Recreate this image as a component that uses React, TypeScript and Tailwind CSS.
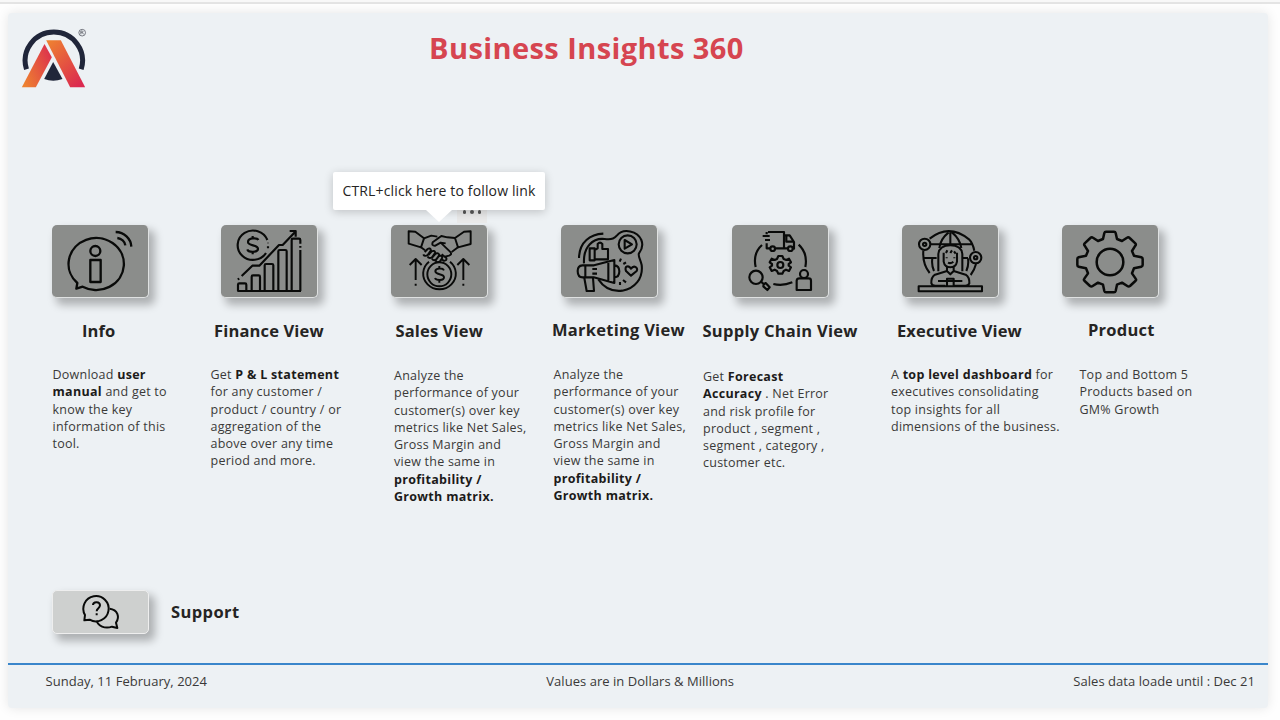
import type { ReactNode } from "react";

type View = {
  title: string;
  column: string;
  card: string;
  heading: string;
  body: string;
  box: string;
  icon: ReactNode;
  lines: ReactNode[];
};

const GEAR =
  "M168 50 H192 Q196 50 197 54 L201 72 L216 78 L231 68 Q235 65 239 69 L256 85 Q259 88 256 92 L246 108 L252 122 L274 127 Q278 128 278 132 V150 Q278 154 274 155 L252 160 L246 175 L257 191 Q260 195 256 198 L240 213 Q236 216 232 213 L216 203 L201 209 L197 228 Q196 232 192 232 H168 Q164 232 163 228 L159 209 L144 203 L128 213 Q124 216 120 213 L104 198 Q100 195 103 191 L114 175 L108 160 L86 155 Q82 154 82 150 V132 Q82 128 86 127 L108 122 L114 108 L104 92 Q101 88 104 85 L121 69 Q125 65 129 68 L144 78 L159 72 L163 54 Q164 50 168 50 Z";

const InfoIcon = (
  <g strokeWidth="7">
    <path d="M113 205 A83 78 0 1 1 129 216 L110 222 Z" />
    <circle cx="167" cy="109" r="15" />
    <path d="M152 136h31v66h-31z" />
    <path d="M228 52 A48 46 0 0 1 275 96 M233 70 A28 26 0 0 1 257 92" />
  </g>
);

const FinanceIcon = (
  <g strokeWidth="6.5">
    <path d="M172 76 A46 44 0 1 0 168 115 M174 84v2 M174 95v6" />
    <path d="M145 76 C142 69 114 68 114 82 C114 95 144 89 144 102 C144 114 115 114 112 104 M128 64v8 M128 110v9" />
    <path d="M83 194l5-2 M95 184 L127 153 H148 L207 91 H218 L256 51 M239 49H257V66" />
    <path d="M82 229H273 M84 229V210q0-4 4-4h17q4 0 4 4v19 M125 229V186q0-4 4-4h17q4 0 4 4v43 M164 229V152q0-4 4-4h18q4 0 4 4v77 M205 229V110q0-4 4-4h17q4 0 4 4v119 M245 229V76q0-4 4-4h18q4 0 4 4v11 M271 94v5 M271 106V229" />
  </g>
);

const SalesIcon = (
  <g strokeWidth="5.8">
    <path d="M251 200 L271 201 L297 221 L288 248 L251 237 Z M437 200 L417 201 L390 220 L399 248 L437 238 Z" />
    <path d="M297 221 L319 213 L337 216 M390 220 L367 218 L349 214 L323 233 Q319 244 331 243 L347 234 L375 261 Q383 269 372 273 L360 276 M288 248 L300 257 M399 248 L380 262 M347 234 L362 236" />
    <path d="M299 262 l9-9 q7-5 10 4 l-10 14 q-10 6-13-2 M310 271 l10-11 q8-4 11 4 l-10 14 q-10 5-13-3 M322 278 l10-11 q8-4 11 4 l-9 13 q-9 6-13-2 M334 284 l8-10 q8-3 10 5 l-8 12 q-9 4-12-3 M350 269 l14 11 q2 9-8 8 l-8-5" />
    <path d="M312 291 A49 47 0 1 0 375 291" />
    <circle cx="343" cy="329" r="36" />
    <path d="M357 317 C353 309 331 310 331 320 C331 332 357 325 357 338 C357 349 333 348 330 340 M343 304v8 M343 345v9" />
    <path d="M272 284V346 M272 357v6 M254 301 L272 283 L290 301 M415 284V346 M415 357v6 M397 301 L415 283 L433 301" />
  </g>
);

const MarketingIcon = (
  <g strokeWidth="6.3">
    <path d="M87 130 C88 81 121 59 160 57" />
    <path d="M102 146 C99 96 129 69 164 73 C188 76 194 70 201 62 C220 39 263 49 274 76 C281 94 274 107 267 116 C263 123 271 134 275 151 C280 192 254 222 217 228 C183 232 159 215 145 194" />
    <circle cx="233" cy="89" r="27" />
    <path d="M224 76 L246 89 L224 102 Z" />
    <path d="M119 101h15v36h-15z M134 106 L143 101 V88 Q150 80 157 88 V103 H174 V134 H134" />
    <path d="M107 152 H97 Q83 153 83 169 Q83 188 98 188 H131 L193 205 V136 L132 152 Z M106 152V188 M175 141V200 M193 152 Q208 153 208 170 Q208 188 193 188 M127 163h14 M127 177h14 M103 190 L110 229 H132 L129 190" />
    <path d="M243 183 L228 169 C222 155 236 150 243 162 C252 149 266 160 260 169 Z M209 141l4-9 M220 148l8-5 M210 202v9 M219 196l9 7" />
  </g>
);

const SupplyIcon = (
  <g strokeWidth="6.5">
    <path d="M144 52H192V104 M140 52V59 M128 64H149 M135 76H150 M140 86V101H151 M166 101H204 M192 62H209 L222 82V102H216 M199 65V81H220" />
    <circle cx="158" cy="102" r="7" />
    <circle cx="211" cy="102" r="7" />
    <path d="M126 91 Q98 116 107 157 M236 90 Q264 116 256 157 M160 208 Q188 215 217 203" />
    <path d="M175 124h12l4 9 8 3 8-4 6 11-7 5v5l7 5-6 11-9-4-7 4-4 8h-12l-4-8-7-4-9 4-6-11 7-5v-5l-7-5 6-11 9 4 7-3z" />
    <circle cx="181" cy="151" r="9" />
    <circle cx="108" cy="188" r="20" />
    <path d="M123 201 L131 208 M131 209 L137 205 L149 218 L142 226 L130 215 Z" />
    <circle cx="252" cy="178" r="12" />
    <path d="M230 226V198q1-7 8-7h28q7 0 7 7v28z" />
  </g>
);

const ExecutiveIcon = (
  <g strokeWidth="6.2">
    <path d="M119 71 Q177 25 237 73 Q248 84 253 107 M100 107 Q97 147 119 174 M258 147 Q253 166 242 180 M122 88H244 M102 129H140 M217 129H234 M181 50V90 M176 52 Q151 72 148 99 M186 52 Q210 72 214 99 M127 130 Q124 150 132 168 M234 130 Q237 150 229 168" />
    <circle cx="104" cy="88" r="17" />
    <circle cx="104" cy="88" r="5" />
    <circle cx="257" cy="128" r="17" />
    <circle cx="257" cy="128" r="5" />
    <path d="M145 169 V117 Q148 91 181 91 Q214 91 217 117 V169 M161 113 V140 Q164 157 181 157 Q198 157 201 140 V113 M168 114l4-8 M181 114l5-8 M197 116l-5-7 M170 127v3 M193 127v3 M174 143q8 4 16-3 M171 157V168L181 178L191 168V157" />
    <path d="M171 168 L135 179 Q123 187 124 205 Q126 212 136 212 H166 M191 168 L227 179 Q239 187 238 205 Q235 212 226 212 H194 M144 198H169 M192 198H217 M171 212V191H191V212 M171 198H191 M86 214H276V229H86Z" />
  </g>
);

const ProductIcon = (
  <g strokeWidth="7.5">
    <path d={GEAR} />
    <circle cx="180" cy="141" r="40" />
  </g>
);

const salesLines: ReactNode[] = [
  "Analyze the",
  "performance of your",
  "customer(s) over key",
  "metrics like Net Sales,",
  "Gross Margin and",
  "view the same in",
  <b>profitability /</b>,
  <b>Growth matrix.</b>,
];

const views: View[] = [
  {
    title: "Info", column: "w-[158px]", card: "", heading: "ml-[30px] tracking-[0.1px]", body: "ml-[0.5px]", box: "37 31 288 216", icon: InfoIcon,
    lines: [<>Download <b>user</b></>, <><b>manual</b> and get to</>, "know the key", "information of this", "tool."],
  },
  {
    title: "Finance View", column: "w-[181px]", card: "ml-[11px]", heading: "ml-1 tracking-[0.15px]", body: "ml-[0.5px]", box: "33 31 288 216", icon: FinanceIcon,
    lines: [<>Get <b>P &amp; L statement</b></>, "for any customer /", "product / country / or", "aggregation of the", "above over any time", "period and more."],
  },
  {
    title: "Sales View", column: "w-[161px]", card: "", heading: "ml-[4.5px] tracking-[0.15px]", body: "ml-[3px] mt-px", box: "198 181 288 216", icon: SalesIcon,
    lines: salesLines,
  },
  {
    title: "Marketing View", column: "w-[150px]", card: "ml-[9px]", heading: "relative -top-px tracking-[0.25px]", body: "ml-[1.5px]", box: "33 31 288 216", icon: MarketingIcon,
    lines: salesLines,
  },
  {
    title: "Supply Chain View", column: "w-[189px]", card: "ml-[30px]", heading: "ml-[0.5px] tracking-[0.27px]", body: "ml-px mt-0.5", box: "36 31 288 216", icon: SupplyIcon,
    lines: [<>Get <b>Forecast</b></>, <><b>Accuracy</b> . Net Error</>, "and risk profile for", "product , segment ,", "segment , category ,", "customer etc."],
  },
  {
    title: "Executive View", column: "w-[171px]", card: "ml-[11px]", heading: "ml-1.5 tracking-[0.12px]", body: "", box: "36 30 288 216", icon: ExecutiveIcon,
    lines: [<>A <b>top level dashboard</b> for</>, "executives consolidating", "top insights for all", "dimensions of the business."],
  },
  {
    title: "Product", column: "w-[150px]", card: "", heading: "ml-[26px] relative -top-px tracking-[0.25px]", body: "ml-[17.5px]", box: "36 30 288 216", icon: ProductIcon,
    lines: ["Top and Bottom 5", "Products based on", "GM% Growth"],
  },
];

function Logo() {
  return (
    <svg className="h-[64px] w-[68px] shrink-0" viewBox="63.5 79 204 192">
      <defs>
        <linearGradient id="left" x1="0" y1="0.8" x2="1" y2="0.2">
          <stop offset="0" stopColor="#ee8230" />
          <stop offset="1" stopColor="#dc304d" />
        </linearGradient>
        <linearGradient id="right" x1="0" y1="0" x2="0.8" y2="1">
          <stop offset="0" stopColor="#ef8430" />
          <stop offset="1" stopColor="#db2a4f" />
        </linearGradient>
      </defs>
      <path d="M80 209 A86 86 0 1 1 244 209" fill="none" stroke="#20263a" strokeWidth="15" />
      <path d="M160 187 L188 238 Q160 248 133 238 Z" fill="#20263a" />
      <path d="M66 263 L134 133 L156 173 L108 263 Z" fill="url(#left)" />
      <path d="M139 122 H183 L256 263 H211 Z" fill="url(#right)" />
      <circle cx="247" cy="99" r="10" fill="none" stroke="#60636c" strokeWidth="2.5" />
      <path d="M243 104V94h5q4 3 0 5h-5m5 0l3 5" fill="none" stroke="#60636c" strokeWidth="2.5" />
    </svg>
  );
}

function IconCard({ view }: { view: View }) {
  const active = view.title === "Sales View";
  return (
    <div className={`relative h-[73px] w-[97px] ${view.card}`}>
      <div className="h-full w-full overflow-hidden rounded-[5px] border-r-[1.5px] border-b-[1.5px] border-[#dfe1e1] bg-[#8b8d8b] shadow-[5px_6px_8px_1px_rgba(0,0,0,0.27)]">
        <svg className="h-[72px] w-[96px] max-w-none" viewBox={view.box} fill="none" stroke="#090a09" strokeLinejoin="round">
          {view.icon}
        </svg>
      </div>
      {active && (
        <>
          <div className="absolute -top-[17px] left-[66px] flex h-[15px] w-[30px] justify-center gap-[4px] bg-[#e9e9e9] pt-[1px]">
            <i className="mt-[1px] h-[3.5px] w-[3.5px] rounded-full bg-[#555]" />
            <i className="mt-[1px] h-[3.5px] w-[3.5px] rounded-full bg-[#555]" />
            <i className="mt-[1px] h-[3.5px] w-[3.5px] rounded-full bg-[#555]" />
          </div>
          <div className="absolute -top-[53px] -left-[58px] flex h-[37.5px] w-[212px] items-center justify-center rounded-[2px] bg-white text-[14px] whitespace-nowrap text-[#252423] shadow-[0_2px_10px_rgba(0,0,0,0.2)]">
            <span className="tracking-[0.14px]">CTRL+click here to follow link</span>
            <svg className="absolute top-full left-[93px] h-[12px] w-[26px]" viewBox="0 0 26 12">
              <path d="M0 0H26L13 12Z" fill="white" />
            </svg>
          </div>
        </>
      )}
    </div>
  );
}

export default function App() {
  return (
    <div className="flex h-[720px] w-[1280px] flex-col overflow-hidden bg-[#fefefe] font-['Open_Sans','Noto_Sans',sans-serif] text-[#252423]">
      <div className="h-[4px] shrink-0 border-b-2 border-[#e4e4e4] bg-[#f8f8f8]" />
      <div className="mt-[9px] ml-[8px] flex h-[695px] w-[1260px] shrink-0 flex-col rounded-[4px] bg-[#edf1f4] shadow-[0_0_12px_rgba(0,0,0,0.1)]">
        <header className="flex h-[212px] shrink-0 items-start pt-[13px] pl-[13px]">
          <Logo />
          <h1 className="ml-[340px] text-[29px] leading-[43px] font-bold tracking-[0.42px] whitespace-nowrap text-[#d64550]">Business Insights 360</h1>
        </header>
        <main className="flex h-[365px] shrink-0 pl-[44px]">
          {views.map((view) => (
            <section key={view.title} className={`shrink-0 ${view.column}`}>
              <IconCard view={view} />
              <h2 className={`mt-[20px] text-[16.5px] leading-[26px] font-bold whitespace-nowrap ${view.heading}`}>{view.title}</h2>
              <div className="pt-[22px]">
                <div className={`text-[12.5px] leading-[17.25px] tracking-[0.24px] whitespace-nowrap text-[#3a3938] [&_b]:tracking-[0.3px] [&_b]:text-[#1c1b1a] ${view.body}`}>
                  {view.lines.map((line, i) => (
                    <p key={i}>{line}</p>
                  ))}
                </div>
              </div>
            </section>
          ))}
        </main>
        <div className="flex h-[73px] shrink-0 items-start pl-[44px]">
          <div className="h-[44px] w-[97px] overflow-hidden rounded-[5px] border border-[#eeeeee] bg-[#ced0cf] shadow-[5px_6px_8px_1px_rgba(0,0,0,0.27)]">
            <svg className="h-[43px] w-[96px] max-w-none" viewBox="38 33 288 129" fill="none" stroke="#090a09" strokeWidth="6" strokeLinejoin="round">
              <path d="M134 105 A38 38 0 1 1 148 119 L132 121 Z" />
              <path d="M208 86 C232 89 239 111 227 128 L231 144 L215 140 C193 148 173 137 169 122" />
              <path d="M158 75 C159 63 179 64 179 76 C179 85 169 84 169 94 M169 100v6" />
            </svg>
          </div>
          <h2 className="ml-[22px] text-[16.5px] leading-[44px] font-bold tracking-[0.4px]">Support</h2>
        </div>
        <footer className="flex h-[45px] shrink-0 justify-between border-t-2 border-[#3a86cb] pr-[13px] pl-[37.5px] text-[13px] leading-[32px] tracking-[0.04px] whitespace-nowrap text-[#3a3938]">
          <span>Sunday, 11 February, 2024</span>
          <span>Values are in Dollars &amp; Millions</span>
          <span>Sales data loade until : Dec 21</span>
        </footer>
      </div>
    </div>
  );
}
